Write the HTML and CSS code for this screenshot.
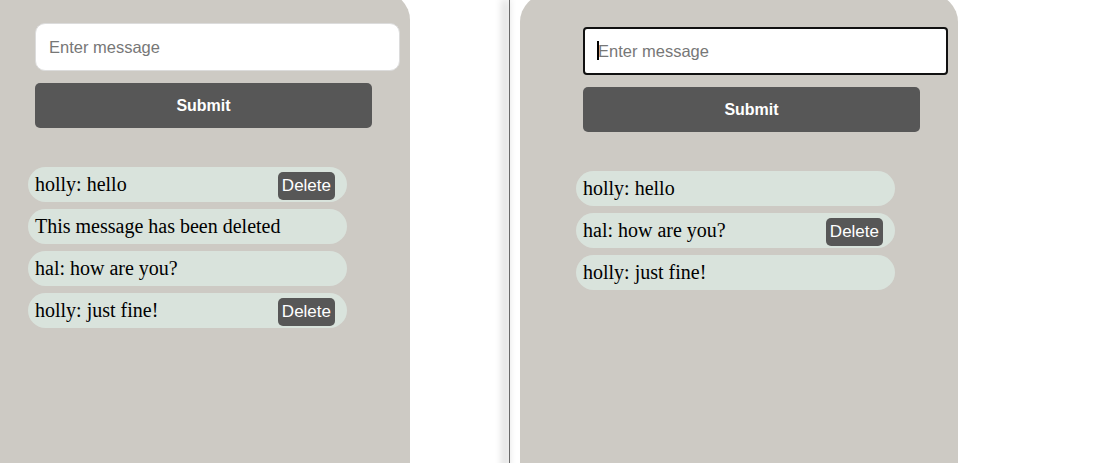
FILE: index.html
```html
<!DOCTYPE html>
<html>
<head>
<meta charset="utf-8">
<link rel="stylesheet" href="styles.css">
</head>
<body>
<div class="stage">
  <section class="panel panel-left">
    <form class="composer">
      <div class="field"><input class="msg-input" type="text" placeholder="Enter message"></div>
      <button class="submit" type="button">Submit</button>
    </form>
    <ul class="messages">
      <li class="message"><span>holly: hello</span><button class="delete" type="button">Delete</button></li>
      <li class="message"><span>This message has been deleted</span></li>
      <li class="message"><span>hal: how are you?</span></li>
      <li class="message"><span>holly: just fine!</span><button class="delete" type="button">Delete</button></li>
    </ul>
  </section>
  <div class="divider"></div>
  <section class="panel panel-right">
    <form class="composer">
      <div class="field"><input class="msg-input focused" type="text" placeholder="Enter message"><span class="caret"></span></div>
      <button class="submit" type="button">Submit</button>
    </form>
    <ul class="messages">
      <li class="message"><span>holly: hello</span></li>
      <li class="message"><span>hal: how are you?</span><button class="delete" type="button">Delete</button></li>
      <li class="message"><span>holly: just fine!</span></li>
    </ul>
  </section>
</div>
</body>
</html>
```
FILE: styles.css
```css
html, body {
  margin: 0;
  padding: 0;
  background: #ffffff;
  overflow: hidden;
}
.stage {
  display: flex;
  align-items: flex-start;
  width: 1101px;
  height: 463px;
  overflow: hidden;
}
.panel {
  flex: none;
  box-sizing: border-box;
  width: 438px;
  height: 500px;
  background: #cdcac4;
  border-radius: 28px 28px 0 0;
  padding-left: 56px;
}
.panel-left {
  margin-left: -28px;
  margin-top: -8px;
  padding-top: 31px;
}
.panel-right {
  margin-left: 10px;
  margin-top: -6px;
  padding-top: 33px;
}
.divider {
  flex: none;
  width: 1px;
  height: 480px;
  margin-left: 99px;
  background: #6a6a6a;
  box-shadow: -4px 0 9px 1px rgba(0, 0, 0, 0.32);
}
.composer {
  margin: 0 0 0 7px;
  display: flex;
  flex-direction: column;
  align-items: flex-start;
}
.field {
  position: relative;
}
.msg-input {
  box-sizing: border-box;
  width: 365px;
  height: 48px;
  margin: 0;
  padding: 0 13px;
  border: 1px solid #dcdcdc;
  border-radius: 10px;
  background: #ffffff;
  font-family: "Liberation Sans", Arial, sans-serif;
  font-size: 16.5px;
  outline: none;
}
.msg-input::placeholder {
  color: #777777;
}
.msg-input.focused {
  border: 2px solid #111111;
  border-radius: 4px;
  box-shadow: inset 0 0 0 1px #ffffff;
  padding-left: 13px;
}
.caret {
  position: absolute;
  left: 14px;
  top: 14px;
  width: 2px;
  height: 19px;
  background: #000000;
}
.submit {
  box-sizing: border-box;
  width: 337px;
  height: 45px;
  margin-top: 12px;
  border: none;
  border-radius: 5px;
  background: #575757;
  color: #ffffff;
  font-family: "Liberation Sans", Arial, sans-serif;
  font-size: 16px;
  font-weight: bold;
}
.messages {
  list-style: none;
  margin: 39px 0 0 0;
  padding: 0;
  display: flex;
  flex-direction: column;
  gap: 7px;
}
.message {
  box-sizing: border-box;
  width: 319px;
  height: 35px;
  display: flex;
  align-items: center;
  justify-content: space-between;
  padding: 0 12px 0 7px;
  background: #d9e3dc;
  border-radius: 18px;
  font-family: "Liberation Serif", "Times New Roman", serif;
  font-size: 20px;
  color: #000000;
}
.delete {
  box-sizing: border-box;
  height: 28px;
  padding: 0 4px;
  margin-top: 3px;
  border: none;
  border-radius: 5px;
  background: #575757;
  color: #ffffff;
  font-family: "Liberation Sans", Arial, sans-serif;
  font-size: 17px;
}
```
